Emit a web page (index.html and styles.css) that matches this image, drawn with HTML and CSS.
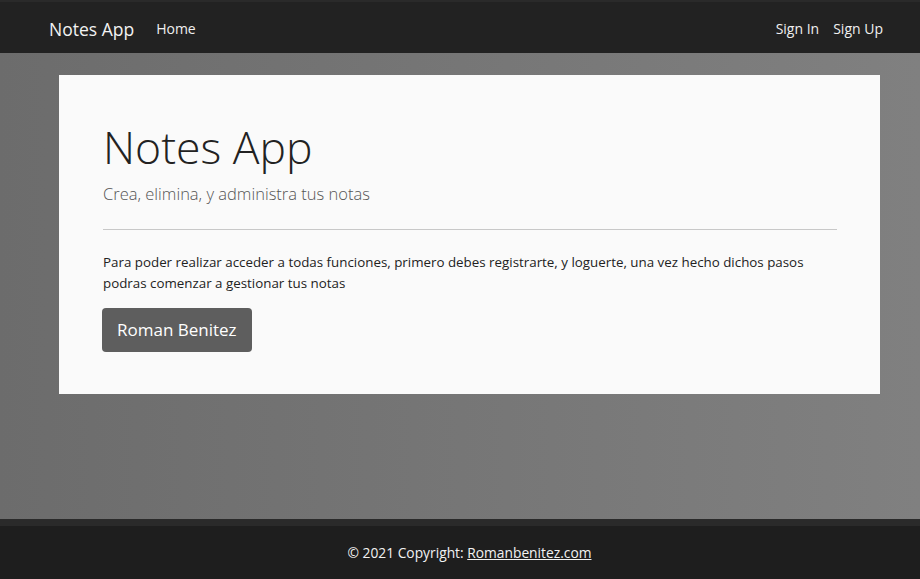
FILE: index.html
```html
<!DOCTYPE html>
<html lang="es">
<head>
<meta charset="utf-8">
<title>Notes App</title>
<link rel="stylesheet" href="styles.css">
</head>
<body>
<nav class="navbar">
  <a class="brand" href="#">Notes App</a>
  <a class="nav-link" href="#">Home</a>
  <div class="nav-right">
    <a class="nav-link" href="#">Sign In</a>
    <a class="nav-link" href="#">Sign Up</a>
  </div>
</nav>
<main class="main">
  <section class="jumbotron">
    <h1 class="display">Notes App</h1>
    <p class="lead">Crea, elimina, y administra tus notas</p>
    <hr class="divider">
    <p class="text">Para poder realizar acceder a todas funciones, primero debes registrarte, y loguerte, una vez hecho dichos pasos podras comenzar a gestionar tus notas</p>
    <a class="btn" href="#">Roman Benitez</a>
  </section>
</main>
<footer class="footer">
  <div class="footer-text">© 2021 Copyright: <a href="#">Romanbenitez.com</a></div>
</footer>
</body>
</html>
```
FILE: styles.css
```css
* { box-sizing: border-box; }
html, body { margin: 0; padding: 0; }
body {
  height: 579px;
  display: flex;
  flex-direction: column;
  font-family: "Open Sans", "Noto Sans", sans-serif;
  background: linear-gradient(to right, #6c6c6c, #808080);
  overflow: hidden;
}
a { text-decoration: none; color: inherit; }
.navbar {
  height: 53px;
  flex: none;
  background: #222222;
  border-top: 2px solid #2a2a2a;
  display: flex;
  align-items: center;
  padding: 2px 37px 0 49px;
  color: #ffffff;
}
.brand {
  font-size: 17.5px;
  margin-right: 22px;
  color: #f2f2f2;
}
.nav-link {
  font-size: 14px;
  color: #f0f0f0;
}
.nav-right {
  margin-left: auto;
  display: flex;
  gap: 14px;
}
.main {
  flex: 1;
  padding: 22px 0 0 59px;
}
.jumbotron {
  width: 821px;
  background: #fafafa;
  padding: 45px 43px 42px 44px;
}
.display {
  margin: 0;
  font-size: 44.5px;
  font-weight: 300;
  line-height: 1.2;
  color: #222;
}
.lead {
  margin: 9px 0 0;
  font-size: 16.5px;
  font-weight: 300;
  color: #555;
}
.divider {
  margin: 24px 0 22px;
  border: 0;
  border-top: 1px solid #c8c8c8;
}
.text {
  margin: 0 0 14px;
  font-size: 13.35px;
  line-height: 21px;
  color: #222;
}
.btn {
  display: inline-block;
  margin-left: -1px;
  background: #5e5e5e;
  color: #fff;
  font-size: 17px;
  padding: 10px 15px 11px;
  border-radius: 4px;
}
.footer {
  height: 60px;
  flex: none;
  background: #1e1e1e;
  border-top: 7px solid #2a2a2a;
  display: flex;
  justify-content: center;
  align-items: center;
  padding-left: 19px;
  color: #f2f2f2;
  font-size: 13.8px;
}
.footer a { text-decoration: underline; }
```
